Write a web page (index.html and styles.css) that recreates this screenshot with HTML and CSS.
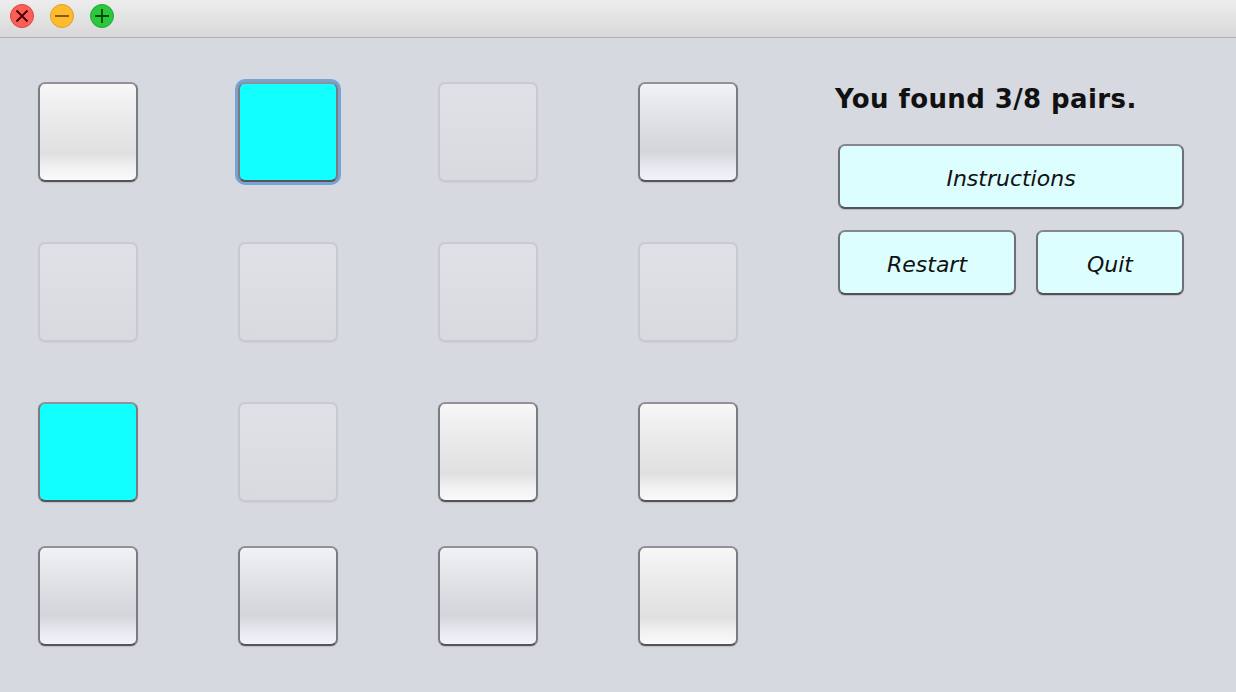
FILE: index.html
```html
<!DOCTYPE html>
<html lang="en">
<head>
    <meta charset="UTF-8">
    <title>Memory Game</title>
    <link rel="stylesheet" href="styles.css">
</head>
<body>
    <div class="titlebar">
        <span class="light close"><svg width="22" height="22" viewBox="0 0 22 22"><path d="M5.5 5.5 L16.5 16.5 M16.5 5.5 L5.5 16.5" stroke="#4a0000" stroke-width="1.8"/></svg></span>
        <span class="light min"><svg width="22" height="22" viewBox="0 0 22 22"><path d="M4 11 L18 11" stroke="#8a4c00" stroke-width="1.8"/></svg></span>
        <span class="light max"><svg width="22" height="22" viewBox="0 0 22 22"><path d="M4 11 L18 11 M11 4 L11 18" stroke="#064806" stroke-width="1.8"/></svg></span>
    </div>
    <div class="window">
        <div class="board">
            <div class="tile plain"></div>
            <div class="tile open focus"></div>
            <div class="tile done"></div>
            <div class="tile blue"></div>

            <div class="tile done"></div>
            <div class="tile done"></div>
            <div class="tile done"></div>
            <div class="tile done"></div>

            <div class="tile open"></div>
            <div class="tile done"></div>
            <div class="tile plain"></div>
            <div class="tile plain"></div>

            <div class="tile blue"></div>
            <div class="tile blue"></div>
            <div class="tile blue"></div>
            <div class="tile plain"></div>
        </div>
        <div class="side">
            <h1 class="score">You found 3/8 pairs.</h1>
            <button class="btn wide">Instructions</button>
            <div class="btn-row">
                <button class="btn restart">Restart</button>
                <button class="btn quit">Quit</button>
            </div>
        </div>
    </div>
</body>
</html>
```

FILE: styles.css
```css
body {
    margin: 0;
    background: #d6d9e0;
    font-family: "DejaVu Sans", sans-serif;
    height: 692px;
    overflow: hidden;
}
.titlebar {
    height: 38px;
    background: linear-gradient(#ededed, #d8d8d8);
    border-bottom: 1px solid #b0b0b0;
    display: flex;
    align-items: center;
    gap: 16px;
    padding-left: 10px;
    padding-bottom: 6px;
    box-sizing: border-box;
}
.light {
    width: 24px;
    height: 24px;
    border-radius: 50%;
    display: flex;
    align-items: center;
    justify-content: center;
    box-sizing: border-box;
}
.close {
    background: #fc5f57;
    border: 1px solid #e0443e;
}
.min {
    background: #fdbc2e;
    border: 1px solid #dea123;
}
.max {
    background: #2ac73f;
    border: 1px solid #1eaa2c;
}
.window {
    display: flex;
    padding: 44px 0 0 38px;
}
.board {
    display: grid;
    grid-template-columns: repeat(4, 100px);
    grid-template-rows: 100px 100px 100px 100px;
    column-gap: 100px;
    row-gap: 60px;
}
.board .tile:nth-child(n+13) {
    margin-top: -16px;
}
.tile {
    width: 100px;
    height: 100px;
    box-sizing: border-box;
    border-radius: 7px;
    border: 2px solid #7a7c82;
    border-top-color: #909298;
    border-bottom-color: #535559;
    box-shadow: 0 1px 1px rgba(0, 0, 0, 0.12);
}
.plain {
    background: linear-gradient(#f7f7f7 0%, #ececec 30%, #e0e0e0 72%, #f2f2f2 88%, #fafafa 100%);
}
.blue {
    background: linear-gradient(#f1f2f5 0%, #e3e4e8 30%, #d3d5da 70%, #e6e8ef 85%, #f1f3f9 100%);
}
.open {
    background: #12ffff;
}
.focus {
    box-shadow: 0 0 0 3px #79a4d2;
}
.done {
    background: linear-gradient(#dfe1e6, #d8dae0);
    border: 2px solid #c8cacf;
    box-shadow: 0 1px 1px rgba(0, 0, 0, 0.05);
}
.side {
    margin-left: 97px;
    width: 350px;
}
.score {
    margin: 1px 0 29px 0;
    font-size: 26px;
    font-weight: bold;
    letter-spacing: 0.4px;
    color: #111;
    line-height: 32px;
}
.btn {
    display: block;
    background: #ddfefe;
    border: 2px solid #6e7075;
    border-top-color: #85878c;
    border-bottom-color: #505256;
    border-radius: 7px;
    font-family: "DejaVu Sans", sans-serif;
    font-style: italic;
    font-size: 22px;
    color: #111;
    height: 65px;
    box-sizing: border-box;
    box-shadow: 0 1px 1px rgba(0, 0, 0, 0.15);
    padding: 3px 0 0 0;
    margin-left: 3px;
}
.wide {
    width: 346px;
}
.btn-row {
    display: flex;
    gap: 17px;
    margin-top: 21px;
}
.restart {
    width: 178px;
}
.quit {
    width: 148px;
}
```
